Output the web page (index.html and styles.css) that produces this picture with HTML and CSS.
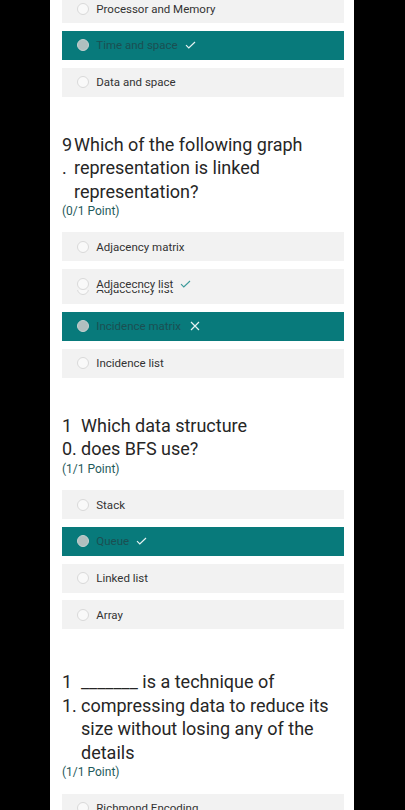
FILE: index.html
```html
<!DOCTYPE html>
<html lang="en">
<head>
<meta charset="utf-8">
<title>Quiz results</title>
<link rel="stylesheet" href="styles.css">
</head>
<body>
<main class="page">
  <div class="options options--first">
    <div class="option"><div class="option-row"><span class="radio"></span><span class="label">Processor and Memory</span></div></div>
    <div class="option option--selected"><div class="option-row"><span class="radio"></span><span class="label">Time and space</span><svg class="mark mark--light" width="11" height="8" viewBox="0 0 11 8"><polyline points="1,4.2 3.8,7 10,1" fill="none" stroke="currentColor" stroke-width="1.2"/></svg></div></div>
    <div class="option"><div class="option-row"><span class="radio"></span><span class="label">Data and space</span></div></div>
  </div>

  <section class="question">
    <h2 class="q-title"><span class="q-num">9.</span><span class="q-text">Which of the following graph representation is linked representation?</span></h2>
    <p class="q-points">(0/1 Point)</p>
    <div class="options">
      <div class="option"><div class="option-row"><span class="radio"></span><span class="label">Adjacency matrix</span></div></div>
      <div class="option option--ghosted">
        <div class="option-row"><span class="radio"></span><span class="label">Adjacecncy list</span><svg class="mark mark--teal" width="11" height="8" viewBox="0 0 11 8"><polyline points="1,4.2 3.8,7 10,1" fill="none" stroke="currentColor" stroke-width="1.1"/></svg></div>
        <div class="ghost" aria-hidden="true"><div class="ghost-row"><span class="radio"></span><span class="label">Adjacecncy list</span></div></div>
      </div>
      <div class="option option--selected"><div class="option-row"><span class="radio"></span><span class="label">Incidence matrix</span><svg class="mark mark--light mark--x" width="10" height="10" viewBox="0 0 10 10"><path d="M1 1 L9 9 M9 1 L1 9" fill="none" stroke="currentColor" stroke-width="1.2"/></svg></div></div>
      <div class="option"><div class="option-row"><span class="radio"></span><span class="label">Incidence list</span></div></div>
    </div>
  </section>

  <section class="question">
    <h2 class="q-title q-title--wide"><span class="q-num">10.</span><span class="q-text">Which data structure<br>does BFS use?</span></h2>
    <p class="q-points">(1/1 Point)</p>
    <div class="options">
      <div class="option"><div class="option-row"><span class="radio"></span><span class="label">Stack</span></div></div>
      <div class="option option--selected"><div class="option-row"><span class="radio"></span><span class="label">Queue</span><svg class="mark mark--light" width="11" height="8" viewBox="0 0 11 8"><polyline points="1,4.2 3.8,7 10,1" fill="none" stroke="currentColor" stroke-width="1.2"/></svg></div></div>
      <div class="option"><div class="option-row"><span class="radio"></span><span class="label">Linked list</span></div></div>
      <div class="option"><div class="option-row"><span class="radio"></span><span class="label">Array</span></div></div>
    </div>
  </section>

  <section class="question question--spaced">
    <h2 class="q-title q-title--wide"><span class="q-num">11.</span><span class="q-text">_______ is a technique of compressing data to reduce its size without losing any of the details</span></h2>
    <p class="q-points">(1/1 Point)</p>
    <div class="options">
      <div class="option"><div class="option-row"><span class="radio"></span><span class="label">Richmond Encoding</span></div></div>
    </div>
  </section>
</main>
</body>
</html>
```

FILE: styles.css
```css
html, body {
  margin: 0;
  padding: 0;
  background: #000;
}

.page {
  box-sizing: border-box;
  width: 304px;
  height: 810px;
  margin-left: 50px;
  padding: 0 10px 0 12px;
  background: #fff;
  overflow: hidden;
  font-family: Roboto, "Noto Sans", sans-serif;
}

.options {
  display: flex;
  flex-direction: column;
  gap: 7.8px;
}

.options--first {
  margin-top: -6px;
}

.option {
  background: #f2f2f2;
}

.option-row,
.ghost-row {
  display: flex;
  align-items: center;
  height: 29px;
  padding-left: 14.7px;
  font-size: 11.5px;
  color: #333;
}

.radio {
  box-sizing: border-box;
  flex: none;
  width: 12px;
  height: 12px;
  margin-right: 7.6px;
  border: 1px solid #d9d9d9;
  border-radius: 50%;
  background: #f9f9f9;
}

.mark {
  flex: none;
  margin-left: 7px;
}

.mark--x {
  margin-left: 9px;
}

.mark--light {
  color: #e6f2f2;
}

.mark--teal {
  color: #3c9a9a;
}

.option--selected {
  background: #087a7b;
}

.option--selected .option-row {
  color: #1b4f52;
}

.option--selected .radio {
  background: #b1bfbf;
  border-color: #c6d1d1;
}

.option--ghosted {
  padding-bottom: 9px;
}

.ghost {
  height: 5.5px;
  margin-top: -8.5px;
  overflow: hidden;
}

.ghost-row {
  height: 14px;
  margin-top: -8px;
}

.question {
  margin-top: 36px;
}

.question--spaced {
  margin-top: 41px;
}

.q-title {
  display: grid;
  grid-template-columns: 12px 1fr;
  margin: 0;
  font-size: 18px;
  font-weight: 400;
  line-height: 23.5px;
  color: #262626;
}

.q-title--wide {
  grid-template-columns: 19px 1fr;
}

.q-num {
  line-break: anywhere;
  word-break: break-all;
}

.q-points {
  margin: 0 0 13.3px;
  font-size: 12px;
  line-height: 16px;
  color: #1f5a5c;
}
```
